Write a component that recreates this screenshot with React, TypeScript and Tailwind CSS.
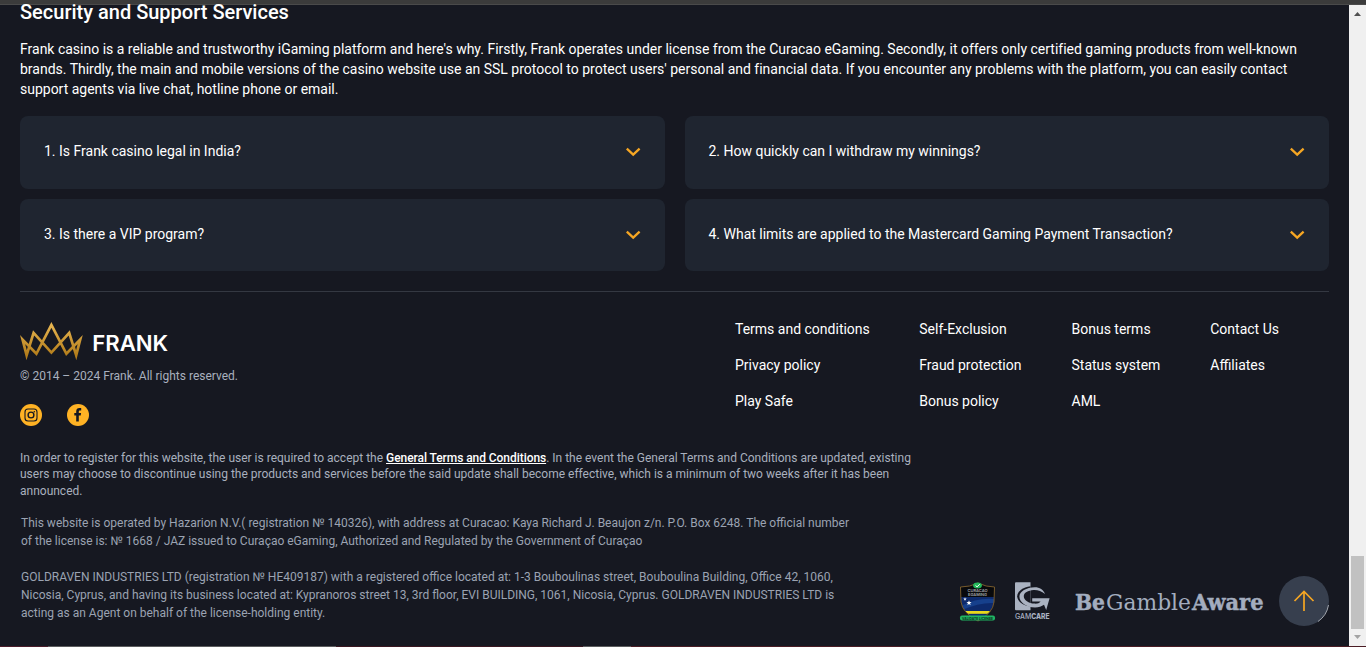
import React from 'react';

const questions = [
  '1. Is Frank casino legal in India?',
  '2. How quickly can I withdraw my winnings?',
  '3. Is there a VIP program?',
  '4. What limits are applied to the Mastercard Gaming Payment Transaction?',
];

const linkColumns = [
  { width: 'w-[184.25px]', links: ['Terms and conditions', 'Privacy policy', 'Play Safe'] },
  { width: 'w-[152.25px]', links: ['Self-Exclusion', 'Fraud protection', 'Bonus policy'] },
  { width: 'w-[138.75px]', links: ['Bonus terms', 'Status system', 'AML'] },
  { width: 'w-[118.75px]', links: ['Contact Us', 'Affiliates'] },
];

function Lines({ rows, className }: { rows: React.ReactNode[]; className: string }) {
  return (
    <p className={className}>
      {rows.map((row, i) => (
        <span key={i} className="block whitespace-nowrap">
          {row}
        </span>
      ))}
    </p>
  );
}

function Chevron() {
  return (
    <svg width="16" height="10" viewBox="0 0 16 10" fill="none" className="shrink-0">
      <path d="M1.8 1.6 L8.2 7.6 L14.6 1.6" stroke="#f5a623" strokeWidth="2.3" />
    </svg>
  );
}

function FrankLogo() {
  return (
    <svg width="150" height="38" viewBox="0 0 150 38" className="block overflow-visible">
      <defs>
        <linearGradient id="gold" x1="0" y1="0" x2="0" y2="1">
          <stop offset="0" stopColor="#e6b450" />
          <stop offset="1" stopColor="#b37d1b" />
        </linearGradient>
      </defs>
      <path
        d="M2.6 17.6 L16.4 31.8 L31.4 3 L46.4 31.8 L60.2 17.6 L56.2 33.2 L49.2 10.8 L31.4 30.6 L13.6 10.8 L6.6 33.2 Z"
        fill="none"
        stroke="url(#gold)"
        strokeWidth="2.7"
        strokeMiterlimit="8"
      />
      <text x="72.2" y="28.8" fill="#ffffff" fontFamily="Inter, sans-serif" fontWeight="600" fontSize="21.5" textLength="76" lengthAdjust="spacingAndGlyphs">
        FRANK
      </text>
    </svg>
  );
}

function Instagram() {
  return (
    <svg width="22" height="22" viewBox="0 0 22 22">
      <circle cx="11" cy="11" r="11" fill="#ffb224" />
      <g fill="none" stroke="#161821" strokeWidth="1.1">
        <rect x="5" y="5" width="12" height="12" rx="3" />
        <circle cx="11" cy="11" r="2.9" strokeWidth="1.4" />
      </g>
      <circle cx="14.3" cy="7.7" r="0.8" fill="#161821" />
    </svg>
  );
}

function Facebook() {
  return (
    <svg width="22" height="22" viewBox="0 0 22 22">
      <circle cx="11" cy="11" r="11" fill="#ffb224" />
      <path d="M9.2 17.5V11.6H7.3V9.1h1.9V7.4c0-2.1 1.2-3.3 3.2-3.3h1.8v2.4h-1.2c-.8 0-1.2.4-1.2 1.2v1.4h2.3l-.4 2.5H11.8v5.9Z" fill="#161821" />
    </svg>
  );
}

function CuracaoBadge() {
  return (
    <svg width="36" height="40" viewBox="0 0 36 40" className="overflow-visible">
      <defs>
        <clipPath id="shield">
          <path d="M0.5 5 Q10 5 18 1 Q26 5 34.5 5 L34 20 Q33 31 18 39 Q2.5 31 1 20 Z" />
        </clipPath>
      </defs>
      <g clipPath="url(#shield)">
        <rect width="36" height="40" fill="#08090c" />
        <rect y="15" width="36" height="25" fill="#0d2a6c" />
        <path d="M1 24 Q18 15 35 17 V21 Q20 20 2 28Z" fill="#16408c" />
        <rect y="29" width="36" height="2.8" fill="#e8d81c" />
      </g>
      <path d="M0.5 5 Q10 5 18 1 Q26 5 34.5 5 L34 20 Q33 31 18 39 Q2.5 31 1 20 Z" fill="none" stroke="#765a2c" strokeWidth="1" />
      <ellipse cx="17.5" cy="3.6" rx="4.4" ry="3" fill="#22b85a" />
      <path d="M15.5 3.4l1.6 1.5 2.6-2.7" fill="none" stroke="#fff" strokeWidth="1" />
      <g fill="#a5a6aa" fontFamily="Inter, sans-serif" fontWeight="600" fontSize="4" textAnchor="middle">
        <text x="17.5" y="10.4" textLength="20" lengthAdjust="spacingAndGlyphs">CURACAO</text>
        <text x="17.5" y="14" textLength="19" lengthAdjust="spacingAndGlyphs">EGAMING</text>
      </g>
      <path d="M5 15.2l.5 1.2 1.3.1-1 .8.3 1.3-1.1-.7-1.1.7.3-1.3-1-.8 1.3-.1Z" fill="#dfe5ef" />
      <path d="M9 18.2l.7 1.8 1.9.1-1.5 1.2.5 1.9L9 22.1l-1.6 1.1.5-1.9-1.5-1.2 1.9-.1Z" fill="#fff" />
      <rect x="0" y="33.6" width="35" height="5" rx="2" fill="#20b562" />
      <text x="17.5" y="37.6" textAnchor="middle" fill="#0b2e1b" fontFamily="Inter, sans-serif" fontWeight="700" fontSize="4" textLength="31" lengthAdjust="spacingAndGlyphs">
        VALIDATE LICENSE
      </text>
    </svg>
  );
}

function GamCare() {
  return (
    <svg width="36" height="40" viewBox="0 0 36 40" className="overflow-visible">
      <path d="M1 0.2H15.5V28.2H1Q0 28.2 0 27.2V1.2Q0 0.2 1 0.2Z" fill="#aab2c1" />
      <path d="M15.5 4.2C8 5.2 2.2 9.4 2.2 14.2C2.2 19.2 8 23.6 15.5 24.6Z" fill="#161821" />
      <path
        d="M30 12C28.6 7.6 24.6 5.2 19.8 5.2C11.4 5.4 4.4 9.4 4.4 14.4C4.4 20.4 11.6 25.4 20 25.4C23.6 25.4 26.8 24.4 29 22.8L31.2 28L34.6 16.2H17.2V19.4H25.6C24.2 21.2 22.2 21.8 19.6 21.6C13.6 21.4 8.8 18.2 8.8 14.2C8.8 10.8 13 8.4 18.6 8C23 7.8 26.4 9.2 30 12Z"
        fill="#aab2c1"
      />
      <g fill="#aab2c1" fontFamily="Inter, sans-serif" fontSize="7.4">
        <text x="0" y="37" fontWeight="500" textLength="16.3" lengthAdjust="spacingAndGlyphs">GAM</text>
        <text x="16.3" y="37" fontWeight="800" textLength="18.2" lengthAdjust="spacingAndGlyphs">CARE</text>
      </g>
    </svg>
  );
}

function GambleAware() {
  return (
    <svg width="190" height="26" viewBox="0 0 190 26" className="overflow-visible">
      <g fill="#a3adbf" fontFamily="'DejaVu Serif', serif" fontSize="23">
        <text x="0" y="20" fontWeight="700" textLength="30" lengthAdjust="spacingAndGlyphs" stroke="#a3adbf" strokeWidth="0.5">Be</text>
        <text x="31" y="20" textLength="85" lengthAdjust="spacingAndGlyphs">Gamble</text>
        <text x="117" y="20" fontWeight="700" textLength="71.5" lengthAdjust="spacingAndGlyphs" stroke="#a3adbf" strokeWidth="0.5">Aware</text>
      </g>
    </svg>
  );
}

export default function App() {
  return (
    <div className="flex h-[647px] w-[1366px] flex-col bg-[#161821] font-[Roboto,sans-serif] text-white">
      <div className="h-[5px] shrink-0 border-b border-[#4a4a4a] bg-[#3b3b3b]" />
      <div className="flex h-[641px] shrink-0">
        <main className="relative flex w-[1349px] shrink-0 flex-col px-5">
          <h2 className="-mt-[5px] h-[26px] text-[20px] leading-[24px] font-medium whitespace-nowrap">Security and Support Services</h2>
          <Lines
            className="mt-[13px] text-[14px] leading-5 tracking-[-0.006px]"
            rows={[
              "Frank casino is a reliable and trustworthy iGaming platform and here's why. Firstly, Frank operates under license from the Curacao eGaming. Secondly, it offers only certified gaming products from well-known",
              "brands. Thirdly, the main and mobile versions of the casino website use an SSL protocol to protect users' personal and financial data. If you encounter any problems with the platform, you can easily contact",
              'support agents via live chat, hotline phone or email.',
            ]}
          />
          <section className="mt-[17px] grid w-[1309px] grid-cols-2 gap-x-5 gap-y-[10px]">
            {questions.map((q) => (
              <div key={q} className="flex h-[72.5px] items-center justify-between rounded-lg bg-[#1f2530] px-6">
                <span className="pb-0.5 text-[14px] leading-5 tracking-[-0.006px]">{q}</span>
                <Chevron />
              </div>
            ))}
          </section>

          <footer className="mt-5 border-t border-[#343842]">
            <div className="flex justify-between">
              <div className="pt-[30px]">
                <FrankLogo />
                <p className="mt-2 text-[12px] leading-4 whitespace-nowrap text-[#a9b0be]">© 2014 – 2024 Frank. All rights reserved.</p>
                <div className="mt-5 flex gap-[25px]">
                  <Instagram />
                  <Facebook />
                </div>
              </div>
              <nav className="flex pt-[27px]">
                {linkColumns.map((col) => (
                  <ul key={col.links[0]} className={`flex flex-col gap-4 text-[14px] leading-5 whitespace-nowrap ${col.width}`}>
                    {col.links.map((l) => (
                      <li key={l}>{l}</li>
                    ))}
                  </ul>
                ))}
              </nav>
            </div>
            <div className="flex">
              <div className="w-[939px] shrink-0">
                <Lines
                  className="mt-[23.5px] text-[12px] leading-[16.5px] text-[#a9b0be]"
                  rows={[
                    <>
                      In order to register for this website, the user is required to accept the{' '}
                      <a className="font-medium tracking-[-0.06px] text-white underline">General Terms and Conditions</a>. In the event the General Terms and Conditions are updated, existing
                    </>,
                    'users may choose to discontinue using the products and services before the said update shall become effective, which is a minimum of two weeks after it has been',
                    'announced.',
                  ]}
                />
                <Lines
                  className="mt-[14.5px] pl-px text-[12px] leading-[18px] text-[#9ba3b2]"
                  rows={[
                    'This website is operated by Hazarion N.V.( registration № 140326), with address at Curacao: Kaya Richard J. Beaujon z/n. P.O. Box 6248. The official number',
                    'of the license is: № 1668 / JAZ issued to Curaçao eGaming, Authorized and Regulated by the Government of Curaçao',
                  ]}
                />
                <Lines
                  className="mt-[18px] pl-px text-[12px] leading-[18px] text-[#9ba3b2]"
                  rows={[
                    'GOLDRAVEN INDUSTRIES LTD (registration № HE409187) with a registered office located at: 1-3 Bouboulinas street, Bouboulina Building, Office 42, 1060,',
                    'Nicosia, Cyprus, and having its business located at: Kypranoros street 13, 3rd floor, EVI BUILDING, 1061, Nicosia, Cyprus. GOLDRAVEN INDUSTRIES LTD is',
                    'acting as an Agent on behalf of the license-holding entity.',
                  ]}
                />
              </div>
              <div className="flex items-end gap-[19px] pl-px">
                <CuracaoBadge />
                <GamCare />
                <div className="ml-[5px] pb-[6px]">
                  <GambleAware />
                </div>
              </div>
            </div>
          </footer>

          <button className="absolute top-[571px] left-[1279px] flex h-[50px] w-[50px] items-center justify-center rounded-full bg-[#373f4e]">
            <svg width="50" height="50" viewBox="0 0 50 50" fill="none">
              <path d="M49.5 29 A25 25 0 0 1 39 45.5" stroke="#aeb2b9" strokeWidth="0.9" />
              <path d="M25 35V15.5M15.5 25L25 15.5L34.5 25" stroke="#f5a623" strokeWidth="1.7" />
            </svg>
          </button>
        </main>

        <aside className="flex w-[17px] shrink-0 flex-col items-center bg-[#f0f0f0]">
          <svg width="17" height="17" viewBox="0 0 17 17">
            <path d="M5 11L8.5 7L12 11Z" fill="#505050" />
          </svg>
          <div className="mt-[534px] h-[73px] w-[13px] bg-[#c1c1c1]" />
          <svg width="17" height="17" viewBox="0 0 17 17">
            <path d="M5 6L8.5 10L12 6Z" fill="#a3a3a3" />
          </svg>
        </aside>
      </div>
      <div className="flex h-px shrink-0">
        <div className="w-12 bg-[#4a1c2a]" />
        <div className="w-[288px] bg-[#5c5c5e]" />
        <div className="w-[247px] bg-[#3a1620]" />
        <div className="w-12 bg-[#5c5c5e]" />
        <div className="flex-1 bg-[#4a1c24]" />
      </div>
    </div>
  );
}
